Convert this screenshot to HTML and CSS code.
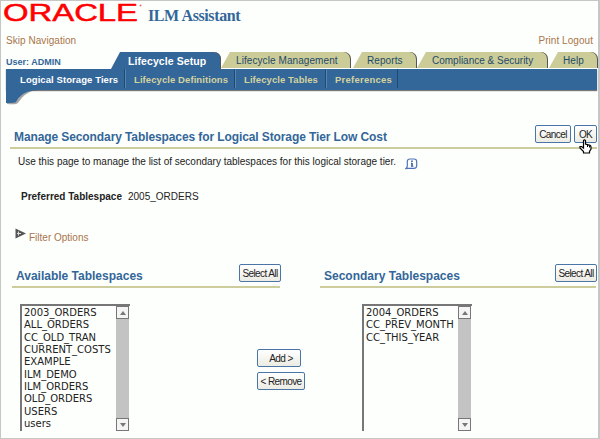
FILE: index.html
```html
<!DOCTYPE html>
<html lang="en">
<head>
<meta charset="utf-8">
<title>ILM Assistant</title>
<link rel="stylesheet" href="styles.css">
</head>
<body>
<div class="page">
  <header class="brand">
    <svg class="logo" width="141" height="22" viewBox="0 0 141 22"><text x="0" y="19" textLength="135" lengthAdjust="spacingAndGlyphs">ORACLE</text><circle cx="137.500" cy="3.500" r="1" fill="#f66"/></svg>
    <span class="product">ILM Assistant</span>
  </header>
  <div class="links"><a class="skip">Skip Navigation</a><a class="logout">Print Logout</a></div>
  <nav class="tabs">
    <span class="user">User: ADMIN</span>
    <a class="tab active"><span>Lifecycle Setup</span></a>
    <a class="tab t-manage"><span>Lifecycle Management</span></a>
    <a class="tab t-reports"><span>Reports</span></a>
    <a class="tab t-security"><span>Compliance &amp; Security</span></a>
    <a class="tab t-help"><span>Help</span></a>
  </nav>
  <nav class="subnav">
    <a class="sub current"><span>Logical Storage Tiers</span></a>
    <a class="sub s-def"><span>Lifecycle Definitions</span></a>
    <a class="sub s-tables"><span>Lifecycle Tables</span></a>
    <a class="sub s-pref"><span>Preferences</span></a>
    <svg class="curve" width="30" height="16" viewBox="0 0 30 16"><path d="M1 0H29Q18 3 12 13Q10 15 1 14Z" fill="#777" opacity=".65"/><path d="M0 0H30V.5H27Q15 2 10 12Q9 13 0 13Z" fill="#336699"/></svg>
  </nav>
  <main>
    <div class="titlebar">
      <h1><span>Manage Secondary Tablespaces for Logical Storage Tier Low Cost</span></h1>
      <button class="cancel">Cancel</button><button class="ok">OK</button>
      <svg class="cursor" width="13" height="15" viewBox="0 0 13 15"><path d="M4.500 7V1.500Q5.500 .2 6.500 1.500V5L11 6.300Q12 7 12 8V10L10.500 12.500V14H4.500V12.500L1 9V7.500H2.500L4.500 9Z" fill="#fff" stroke="#000" stroke-width="1.200"/><path d="M8.500 5.800V8M10.500 6.500V8.500" stroke="#000"/></svg>
    </div>
    <p class="intro"><span>Use this page to manage the list of secondary tablespaces for this logical storage tier.</span>
      <svg width="13" height="12" viewBox="0 0 13 12"><path d="M1 10.500Q2.300 9.500 2.300 8V3.500Q2.300 1 5 1H9Q11.700 1 11.700 3.500V7.500Q11.700 10.300 9 10.300H3.500Z" fill="#fff" stroke="#4f75b8" stroke-width="1.200"/><path d="M7 2.500V4M7 5V8.500" fill="none" stroke="#24549e" stroke-width="1.500"/><path d="M6 5H7M6 8.300H8.500" stroke="#24549e" stroke-width=".7"/></svg></p>
    <p class="preferred"><b>Preferred Tablespace</b><span>2005_ORDERS</span></p>
    <p class="filter"><svg width="12" height="12" viewBox="0 0 12 12"><path d="M.5 .5L11 5.500L.5 10.500Z" fill="#555"/><path d="M2 5.500H6M3.500 3.500V7.500" stroke="#ddd"/></svg><a>Filter Options</a></p>
    <div class="headings">
      <div class="heading"><h2>Available Tablespaces</h2><button class="all">Select All</button></div>
      <div class="heading second"><h2>Secondary Tablespaces</h2><button class="all">Select All</button></div>
    </div>
    <div class="shuttle">
      <div class="list">
        <ul><li>2003_ORDERS</li><li>ALL_ORDERS</li><li>CC_OLD_TRAN</li><li>CURRENT_COSTS</li><li>EXAMPLE</li><li>ILM_DEMO</li><li>ILM_ORDERS</li><li>OLD_ORDERS</li><li>USERS</li><li>users</li></ul>
        <div class="scroll"><i><svg width="6" height="4"><path d="M0 4L3 0L6 4Z"/></svg></i><i><svg width="6" height="4"><path d="M0 0L3 4L6 0Z"/></svg></i></div>
      </div>
      <div class="moves"><button class="add">Add &gt;</button><button class="remove">&lt; Remove</button></div>
      <div class="list">
        <ul><li>2004_ORDERS</li><li>CC_PREV_MONTH</li><li>CC_THIS_YEAR</li></ul>
        <div class="scroll"><i><svg width="6" height="4"><path d="M0 4L3 0L6 4Z"/></svg></i><i><svg width="6" height="4"><path d="M0 0L3 4L6 0Z"/></svg></i></div>
      </div>
    </div>
  </main>
</div>
</body>
</html>
```
FILE: styles.css
```css
* { box-sizing: border-box; }
body { margin: 0; font-family: "Liberation Sans", Arial, sans-serif; font-size: 10px; line-height: 12px; color: #222; }
h1, h2, p, ul { margin: 0; padding: 0; font-size: 12px; }
span, a, h1, h2, b { white-space: nowrap; }
.page { width: 600px; height: 439px; overflow: hidden; background: #fdfffc; border: 1px solid #c6c6c6; border-right-width: 2px; }
.brand { height: 32px; display: flex; padding-left: 2px; }
.logo { margin-top: 1px; overflow: visible; flex: none; }
.logo text { font: 24px "Liberation Sans", sans-serif; fill: #f00; stroke: #f00; stroke-width: .5px; }
.product { font: bold 16px/20px "Liberation Serif", "Times New Roman", serif; color: #336699; margin: 5px 0 0 4px; letter-spacing: -.4px; }
.links { height: 19px; display: flex; justify-content: space-between; padding: 2px 5px 0; color: #a9754b; letter-spacing: .05px; }
.tabs { height: 17px; display: flex; }
.user { width: 105px; margin-left: 5px; flex: none; font-weight: bold; color: #336699; line-height: 21px; font-size: 9px; }
.tab { height: 16px; flex: none; background: #cccc99; color: #1d4a68; padding: 3px 0 0 15px; border-radius: 0 7px 0 0; clip-path: polygon(9px 0, 100% 0, 100% 100%, 0 100%); box-shadow: inset -1px 0 #555; letter-spacing: .08px; }
.active { width: 110px; height: 17px; background: #336699; color: #fff; font-weight: bold; font-size: 10.5px; letter-spacing: .08px; padding-left: 17px; }
.t-manage { width: 130px; }
.t-reports { width: 64px; margin-left: 2px; padding-left: 14px; }
.t-security { width: 131px; letter-spacing: 0; }
.t-help { width: 49px; margin-left: 1px; padding-left: 14px; }
.subnav { position: relative; height: 21px; margin: 0 1px 0 5px; display: flex; background: #336699; box-shadow: 0 1px 1px #777; padding-left: 14px; }
.sub { height: 19px; color: #d3d39f; font-weight: bold; font-size: 9.5px; letter-spacing: .08px; padding: 5px 0 0 9px; border-left: 1px solid #1e4a73; flex: none; box-shadow: inset 1px 0 #5584af; }
.sub.current { color: #fff; border: 0; padding-left: 0; width: 104px; box-shadow: none; }
.s-def { width: 110px; } .s-tables { width: 91px; } .s-pref { width: 73px; letter-spacing: .25px; border-right: 1px solid #1e4a73; }
.curve { position: absolute; left: 0; top: 21px; }
main { padding: 31px 1px 0 9px; }
.titlebar { position: relative; height: 27px; display: flex; border-bottom: 2px solid #cccc9d; margin-top: 1px; }
h1, h2 { color: #336699; font-size: 12px; line-height: 14px; }
h1 { flex: 1; padding: 8px 0 0 4px; letter-spacing: -.1px; }
button { font: 10px/12px "Liberation Sans", sans-serif; letter-spacing: -.6px; color: #222; padding: 1px 0 0; height: 18px; border: 1.500px solid #4a75a7; border-radius: 2px; background: linear-gradient(#fff, #ecece4); white-space: nowrap; flex: none; }
.cancel { width: 36px; margin: 3px 3px 0 0; }
.ok { width: 23px; margin: 3px 0 0; }
.cursor { position: absolute; left: 569px; top: 17px; }
.intro { display: flex; padding: 7px 0 0 8px; height: 37px; font-size: 10px; }
.intro svg { margin: 2px 0 0 9px; }
.preferred { display: flex; padding: 5px 0 0 11px; height: 41px; gap: 6px; font-size: 10px; }
.filter { display: flex; height: 36px; padding-left: 5px; color: #a9754b; font-size: 10px; }
.filter svg { margin: 1px 2px 0 0; }
.filter a { margin-top: 5px; }
.headings { display: flex; padding-left: 2px; }
.heading { width: 268px; height: 25px; display: flex; justify-content: space-between; border-bottom: 2px solid #cccc9d; padding: 1px 0 0 4px; }
.heading h2 { padding-top: 5px; }
.second { width: 276px; margin-left: 40px; }
.all { width: 42px; margin-right: -1px; }
.shuttle { display: flex; padding: 16px 0 0 10px; }
.list { width: 110px; height: 127px; display: flex; border-left: 2px solid #777; border-top: 2px solid #777; }
.list ul { width: 94px; list-style: none; padding: 1px 0 0 2px; font: 10px/12.330px "DejaVu Sans", sans-serif; white-space: nowrap; color: #222; }
.scroll { width: 13px; background: #c3c3c3; display: flex; flex-direction: column; justify-content: space-between; }
.scroll i { height: 13px; display: grid; place-items: center; background: #f4f4f4; border: 1px solid #777; }
.scroll svg { fill: #777; }
.moves { width: 232px; padding: 45px 0 0 127px; display: flex; flex-direction: column; align-items: flex-start; gap: 5px; }
.add { width: 44px; padding-left: 4px; } .remove { width: 48px; }
```
